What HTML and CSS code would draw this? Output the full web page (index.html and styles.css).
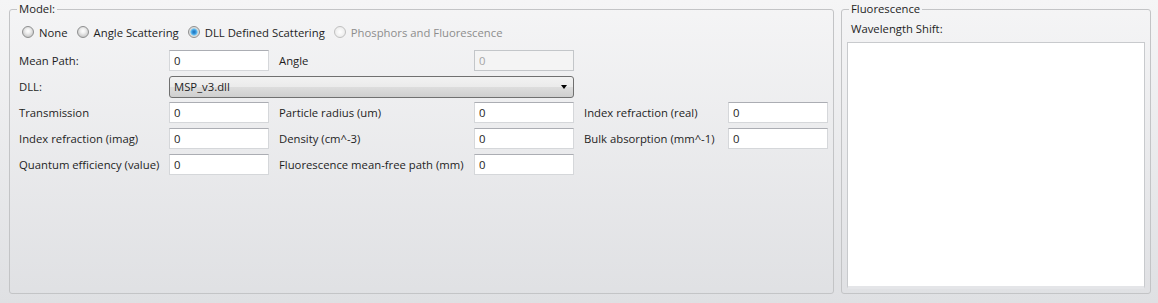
FILE: index.html
```html
<!DOCTYPE html>
<html lang="en">
<head>
    <meta charset="UTF-8">
    <title>Scattering Model</title>
    <link rel="stylesheet" href="styles.css">
</head>
<body>
    <div class="window">
        <fieldset class="group model">
            <legend>Model:</legend>
            <div class="radios">
                <label class="radio"><input type="radio" name="model"> None</label>
                <label class="radio"><input type="radio" name="model"> Angle Scattering</label>
                <label class="radio"><input type="radio" name="model" checked> DLL Defined Scattering</label>
                <label class="radio disabled"><input type="radio" name="model" disabled> Phosphors and Fluorescence</label>
            </div>
            <div class="fields">
                <span class="lbl">Mean Path:</span>
                <input class="box" type="text" value="0">
                <span class="lbl pad">Angle</span>
                <input class="box" type="text" value="0" disabled>
                <span></span><span></span>

                <span class="lbl">DLL:</span>
                <div class="combo">
                    <span>MSP_v3.dll</span>
                    <span class="arrow"></span>
                </div>
                <span></span><span></span>

                <span class="lbl">Transmission</span>
                <input class="box" type="text" value="0">
                <span class="lbl pad">Particle radius (um)</span>
                <input class="box" type="text" value="0">
                <span class="lbl pad">Index refraction (real)</span>
                <input class="box" type="text" value="0">

                <span class="lbl">Index refraction (imag)</span>
                <input class="box" type="text" value="0">
                <span class="lbl pad">Density (cm^-3)</span>
                <input class="box" type="text" value="0">
                <span class="lbl pad">Bulk absorption (mm^-1)</span>
                <input class="box" type="text" value="0">

                <span class="lbl">Quantum efficiency (value)</span>
                <input class="box" type="text" value="0">
                <span class="lbl pad">Fluorescence mean-free path (mm)</span>
                <input class="box" type="text" value="0">
                <span></span><span></span>
            </div>
        </fieldset>
        <fieldset class="group fluor">
            <legend>Fluorescence</legend>
            <div class="shift-label">Wavelength Shift:</div>
            <div class="shift-box"></div>
        </fieldset>
    </div>
</body>
</html>
```
FILE: styles.css
```css
html, body {
    margin: 0;
    padding: 0;
    height: 100%;
}
body {
    font-family: "Open Sans", "Noto Sans", sans-serif;
    font-size: 11.3px;
    color: #1e1e1e;
    background: linear-gradient(#f5f5f6, #dfe0e3);
    overflow: hidden;
}
.window {
    display: flex;
    gap: 7px;
    height: 303px;
    box-sizing: border-box;
    padding: 1px 7px 9px 9px;
}
.group {
    margin: 0;
    padding: 0;
    border: 1px solid #c3c4c6;
    border-radius: 3px;
    box-sizing: border-box;
    min-width: 0;
}
.group legend {
    margin-left: 7px;
    padding: 0 2px;
    line-height: 16px;
}
.model {
    width: 825px;
}
.fluor {
    flex: 1;
    display: flex;
    flex-direction: column;
}
.radios {
    display: flex;
    align-items: center;
    gap: 9px;
    padding: 7px 0 0 12px;
    height: 16px;
}
.radio {
    display: flex;
    align-items: center;
    gap: 5px;
}
.radio.disabled {
    color: #8d8d8d;
}
.radio input {
    appearance: none;
    margin: 0;
    width: 12px;
    height: 12px;
    border-radius: 50%;
    border: 1px solid #8e8f8f;
    box-sizing: border-box;
    background: radial-gradient(circle at 50% 40%, #ffffff 0, #f0f0f0 30%, #c9c9c9 75%);
}
.radio input:checked {
    background: radial-gradient(circle, #1a6db6 0, #3d9be0 30%, #7fd0f6 48%, #d6d6d6 55%, #f4f4f4 100%);
}
.radio input:disabled {
    border-color: #c0c0c0;
    background: radial-gradient(circle, #ffffff 0, #eaeaea 80%);
}
.fields {
    display: grid;
    grid-template-columns: 150px 100px 205px 100px 154px 100px;
    grid-auto-rows: 21px;
    row-gap: 5px;
    padding: 10px 0 0 9px;
    align-items: center;
}
.lbl {
    white-space: nowrap;
}
.lbl.pad {
    padding-left: 10px;
}
.box {
    height: 21px;
    box-sizing: border-box;
    border: 1px solid #d5d7da;
    border-top-color: #abadb3;
    background: #fff;
    font: inherit;
    color: #1e1e1e;
    padding: 0 4px;
    margin: 0;
    width: 100px;
}
.box:disabled {
    background: #f4f4f4;
    border-color: #c3c6c9;
    color: #a5a5a5;
}
.combo {
    grid-column: 2 / 5;
    height: 22px;
    box-sizing: border-box;
    border: 1px solid #707070;
    border-radius: 3px;
    background: linear-gradient(#f2f2f2 0, #ebebeb 50%, #dddddd 51%, #cfcfcf 100%);
    display: flex;
    align-items: center;
    justify-content: space-between;
    padding: 0 6px 0 4px;
}
.arrow {
    width: 0;
    height: 0;
    border-left: 3.5px solid transparent;
    border-right: 3.5px solid transparent;
    border-top: 4px solid #000;
}
.shift-label {
    padding: 4px 0 0 9px;
    line-height: 16px;
}
.shift-box {
    flex: 1;
    margin: 5px 5px 4px 5px;
    background: #fff;
    border: 1px solid #c8cacd;
    border-bottom: 3px solid #e4e5e8;
}
```
